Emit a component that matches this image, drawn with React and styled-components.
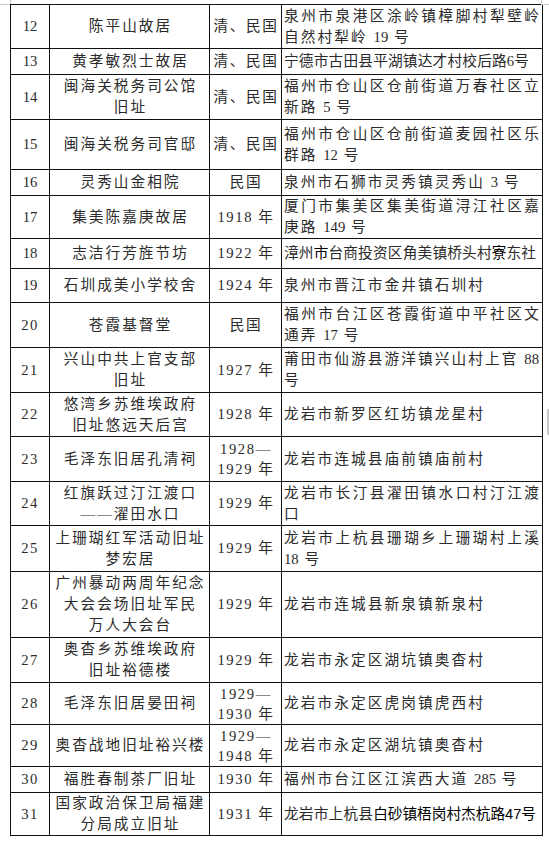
import React from 'react';
import styled, { createGlobalStyle } from 'styled-components';

const GlobalStyle = createGlobalStyle`
  html, body {
    margin: 0;
    background: #fff;
  }
`;

const Page = styled.div`
  position: relative;
  width: 549px;
  height: 843px;
  padding: 4px 0 0 10px;
  box-sizing: border-box;
  overflow: hidden;
  background: #fff;
`;

// Word page corner marks
const Mark = styled.div`
  position: absolute;
  background: #c8c8c8;
`;

const Table = styled.table`
  border-collapse: collapse;
  table-layout: fixed;
  width: 532px;
  font-family: 'Liberation Serif', 'Noto Sans CJK SC', serif;
  font-size: 14.67px;
  line-height: 21px;
  color: #2b2b2b;
`;

const Row = styled.tr`
  height: ${(p) => p.$h}px;
`;

const Cell = styled.td`
  border: 1px solid #111;
  padding: 0;
  vertical-align: middle;
  overflow: hidden;
`;

const NumCell = styled(Cell)`
  text-align: center;
  letter-spacing: ${(p) => (p.$spaced ? '1.5px' : '0')};
`;

const NameCell = styled(Cell)`
  text-align: center;
  letter-spacing: 2px;
  padding-left: 2px;
  line-height: 21px;
`;

const EraCell = styled(Cell)`
  text-align: center;
  letter-spacing: 1.6px;
  padding-left: 1px;
  line-height: ${(p) => (p.$lines > 1 ? '20px' : '21px')};
`;

const AddrCell = styled(Cell)`
  text-align: left;
  padding: 0 3px 0 2px;
`;

const AddrLine = styled.div`
  white-space: nowrap;
  letter-spacing: ${(p) => (p.$justify ? '0' : p.$tight ? '0.2px' : '2.1px')};
  text-align: ${(p) => (p.$justify ? 'justify' : 'left')};
  text-align-last: ${(p) => (p.$justify ? 'justify' : 'left')};
`;

const Digits = styled.span`
  letter-spacing: 0;
`;

const Sans = styled.span`
  font-family: 'Liberation Sans', 'Noto Sans CJK SC', sans-serif;
  color: #000;
  letter-spacing: 0;
`;

const rows = [
  { no: '12', h: 44, name: ['陈平山故居'], era: ['清、民国'], addr: ['泉州市泉港区涂岭镇樟脚村犁壁岭', '自然村犁岭 19 号'] },
  { no: '13', h: 26, name: ['黄孝敏烈士故居'], era: ['清、民国'], addr: ['宁德市古田县平湖镇达才村校后路6号'], tight: true },
  { no: '14', h: 45, name: ['闽海关税务司公馆', '旧址'], era: ['清、民国'], addr: ['福州市仓山区仓前街道万春社区立', '新路 5 号'] },
  { no: '15', h: 50, name: ['闽海关税务司官邸'], era: ['清、民国'], addr: ['福州市仓山区仓前街道麦园社区乐', '群路 12 号'] },
  { no: '16', h: 26, name: ['灵秀山金相院'], era: ['民国'], addr: ['泉州市石狮市灵秀镇灵秀山 3 号'] },
  { no: '17', h: 43, name: ['集美陈嘉庚故居'], era: ['1918 年'], addr: ['厦门市集美区集美街道浔江社区嘉', '庚路 149 号'] },
  { no: '18', h: 30, name: ['志洁行芳旌节坊'], era: ['1922 年'], addr: null },
  { no: '19', h: 34, name: ['石圳成美小学校舍'], era: ['1924 年'], addr: ['泉州市晋江市金井镇石圳村'] },
  { no: '20', h: 45, name: ['苍霞基督堂'], era: ['民国'], addr: ['福州市台江区苍霞街道中平社区文', '通弄 17 号'] },
  { no: '21', h: 45, name: ['兴山中共上官支部', '旧址'], era: ['1927 年'], addr: ['莆田市仙游县游洋镇兴山村上官 88', '号'] },
  { no: '22', h: 44, name: ['悠湾乡苏维埃政府', '旧址悠远天后宫'], era: ['1928 年'], addr: ['龙岩市新罗区红坊镇龙星村'] },
  { no: '23', h: 45, name: ['毛泽东旧居孔清祠'], era: ['1928—', '1929 年'], addr: ['龙岩市连城县庙前镇庙前村'] },
  { no: '24', h: 44, name: ['红旗跃过汀江渡口', '——濯田水口'], era: ['1929 年'], addr: ['龙岩市长汀县濯田镇水口村汀江渡', '口'] },
  { no: '25', h: 46, name: ['上珊瑚红军活动旧址', '梦宏居'], era: ['1929 年'], addr: ['龙岩市上杭县珊瑚乡上珊瑚村上溪', '18 号'] },
  { no: '26', h: 66, name: ['广州暴动两周年纪念', '大会会场旧址军民', '万人大会台'], era: ['1929 年'], addr: ['龙岩市连城县新泉镇新泉村'] },
  { no: '27', h: 45, name: ['奥杳乡苏维埃政府', '旧址裕德楼'], era: ['1929 年'], addr: ['龙岩市永定区湖坑镇奥杳村'] },
  { no: '28', h: 42, name: ['毛泽东旧居晏田祠'], era: ['1929—', '1930 年'], addr: ['龙岩市永定区虎岗镇虎西村'] },
  { no: '29', h: 42, name: ['奥杳战地旧址裕兴楼'], era: ['1929—', '1948 年'], addr: ['龙岩市永定区湖坑镇奥杳村'] },
  { no: '30', h: 26, name: ['福胜春制茶厂旧址'], era: ['1930 年'], addr: ['福州市台江区江滨西大道 285 号'] },
  { no: '31', h: 43, name: ['国家政治保卫局福建', '分局成立旧址'], era: ['1931 年'], addr: null },
];

// keep multi-digit numbers tight inside letter-spaced text
const withDigits = (text) =>
  text.split(/(\d+)/).map((part, i) =>
    /^\d+$/.test(part) ? <Digits key={i}>{part}</Digits> : part
  );

const customAddr = {
  '18': (
    <AddrLine $tight>
      漳州<Sans>市</Sans>台商投资区角美镇桥头村<Sans>寮</Sans>东社
    </AddrLine>
  ),
  '31': (
    <AddrLine $tight>
      龙岩市上杭县<Sans>白砂镇梧岗村杰杭路47号</Sans>
    </AddrLine>
  ),
};

const App = () => (
  <Page>
    <GlobalStyle />
    <Mark style={{ left: 0, top: 4, width: 10, height: 1 }} />
    <Mark style={{ left: 10, top: 0, width: 1, height: 4 }} />
    <Mark style={{ left: 541, top: 0, width: 1, height: 4 }} />
    <Mark style={{ left: 541, top: 4, width: 8, height: 1 }} />
    <Mark style={{ left: 547, top: 409, width: 2, height: 26 }} />
    <Table>
      <colgroup>
        <col style={{ width: 39 }} />
        <col style={{ width: 160 }} />
        <col style={{ width: 72 }} />
        <col style={{ width: 261 }} />
      </colgroup>
      <tbody>
        {rows.map((r) => (
          <Row key={r.no} $h={r.h}>
            <NumCell $spaced={Number(r.no) >= 20}>{r.no}</NumCell>
            <NameCell>
              {r.name.map((l) => (
                <div key={l}>{l}</div>
              ))}
            </NameCell>
            <EraCell $lines={r.era.length}>
              {r.era.map((l) => (
                <div key={l}>{l}</div>
              ))}
            </EraCell>
            <AddrCell>
              {r.addr
                ? r.addr.map((l, i) => (
                    <AddrLine
                      key={l}
                      $tight={r.tight}
                      $justify={r.addr.length > 1 && i < r.addr.length - 1}
                    >
                      {withDigits(l)}
                    </AddrLine>
                  ))
                : customAddr[r.no]}
            </AddrCell>
          </Row>
        ))}
      </tbody>
    </Table>
  </Page>
);

export default App;
